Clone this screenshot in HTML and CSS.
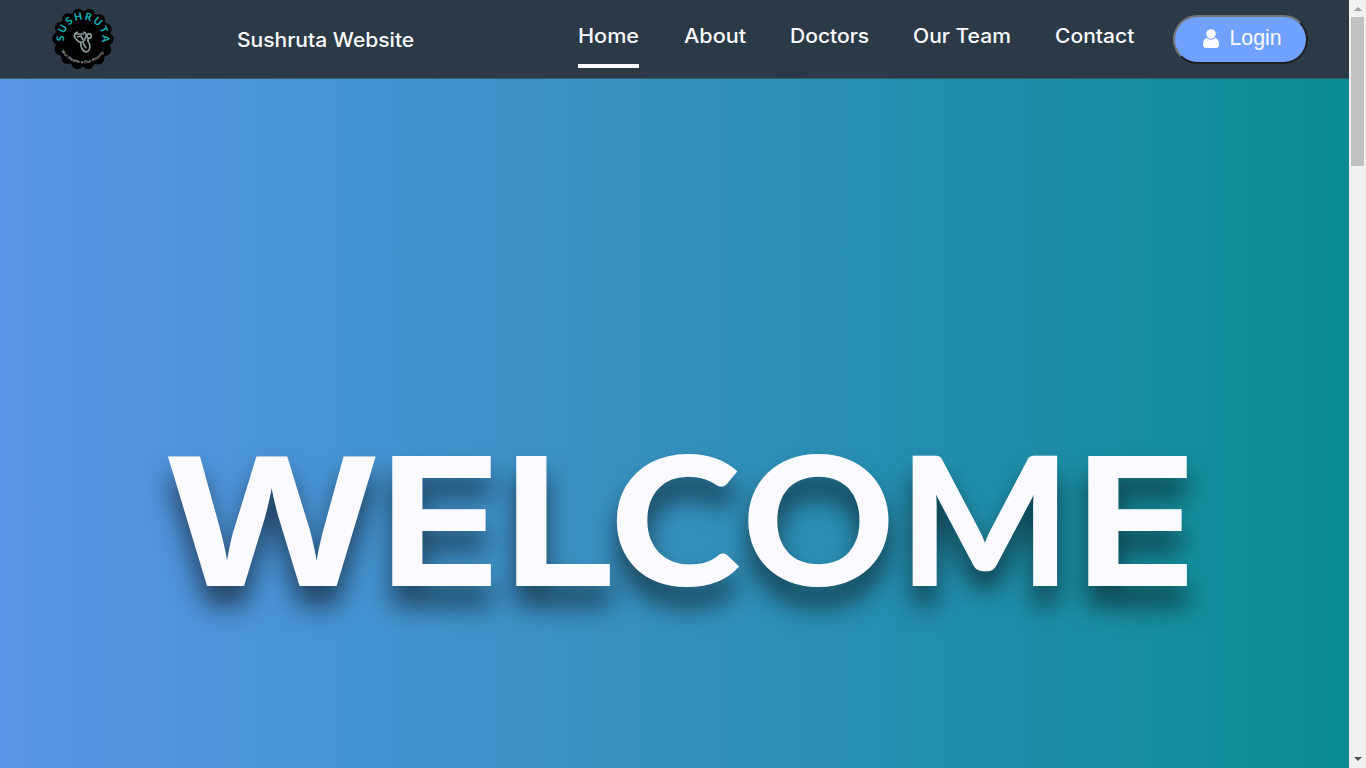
FILE: index.html
```
<!DOCTYPE html>
<html lang="en">
<head>
<meta charset="utf-8">
<title>Sushruta Website</title>
<link rel="stylesheet" href="styles.css">
</head>
<body>
<div class="page">
  <header class="navbar">
    <svg class="logo" viewBox="0 0 62 62" aria-label="Sushruta">
      <defs>
        <path id="arc-top" d="M12.300 34 A19 19 0 1 1 49.700 34"/>
        <path id="arc-bottom" d="M8.500 42 A25.500 25.500 0 0 0 53.500 42"/>
      </defs>
      <circle cx="31" cy="31" r="28"/>
      <circle class="scallops" cx="31" cy="31" r="25"/>
      <text class="logo-name"><textPath href="#arc-top" startOffset="1" textLength="65">SUSHRUTA</textPath></text>
      <path class="logo-ring" d="M10 40 A23 23 0 0 0 52 40"/>
      <text class="logo-motto"><textPath href="#arc-bottom" startOffset="1" textLength="51">Your Health • Our Priority</textPath></text>
      <g class="scope">
        <path d="M26 24 L23.500 25 Q21.500 27 23 30 L27 34 H31 L34 29 Q35 25 31 24"/>
        <path d="M28.500 34 Q29 43 34 44 Q39 43 37.500 36 Q34.500 32 37 30"/>
        <circle cx="37.200" cy="28" r="2.200"/>
        <path d="M25 29 L29 28 L31 32 M31 35 L34 40 M23 26 H32"/>
      </g>
    </svg>
    <div class="brand"><span>Sushruta Website</span></div>
    <nav class="menu">
      <a class="link home active"><span>Home</span></a>
      <a class="link about"><span>About</span></a>
      <a class="link doctors"><span>Doctors</span></a>
      <a class="link team"><span>Our Team</span></a>
      <a class="link contact"><span>Contact</span></a>
    </nav>
    <button class="login">
      <svg class="user" viewBox="0 0 16 19"><circle cx="8" cy="5" r="4.800"/><path d="M3.600 9 Q0 10 0 15.500 Q0 19 3 19 H13 Q16 19 16 15.500 Q16 10 12.400 9 Q8 12.500 3.600 9Z"/></svg>
      <span>Login</span>
    </button>
  </header>
  <main class="hero">
    <h1 class="welcome"><span class="w">W</span><span class="e">E</span><span class="l">L</span><span class="c">C</span><span class="o">O</span><span class="m">M</span><span class="e">E</span></h1>
  </main>
</div>
<aside class="scrollbar"><i class="up"></i><i class="thumb"></i><i class="down"></i></aside>
</body>
</html>
```
FILE: styles.css
```
* { box-sizing: border-box; }
body {
  margin: 0;
  height: 768px;
  display: flex;
  overflow: hidden;
  font-family: Inter, "Open Sans", sans-serif;
  color: #fbfaff;
}
.page {
  width: 1349px;
  height: 768px;
  background: linear-gradient(90deg, #5c95e7 0%, #5494e0 7%, #4793d3 24%, #3890c0 46%, #248eae 68%, #178e9f 86%, #088b91 100%);
}
.navbar {
  height: 79px;
  display: flex;
  align-items: flex-start;
  background: #2c3a47;
  border-bottom: 1px solid #2d5f70;
}
.logo { width: 62px; height: 62px; margin: 8px 0 0 52px; }
.scallops { fill: none; stroke: #000; stroke-width: 11.500; stroke-linecap: round; stroke-dasharray: 0 11.220; }
.logo-name { font: 900 10.300px Lato, sans-serif; fill: #0daeb2; }
.logo-motto { font: 700 4px Lato, sans-serif; fill: #c4b9b5; }
.logo-ring { fill: none; stroke: #063c40; stroke-width: 0.700; }
.scope { fill: none; stroke: #8b9c9b; stroke-width: 1.700; }
.brand {
  width: 178px;
  margin: 28px 0 0 122.500px;
  font-size: 19.400px;
  font-weight: 500;
  line-height: 24px;
  white-space: nowrap;
}
.brand span, .link span { display: inline-block; transform: scaleX(1.085); transform-origin: 0 50%; }
.menu { display: flex; margin: 24px 0 0 163px; gap: 45px; }
.link {
  height: 44px;
  font-size: 19.400px;
  font-weight: 500;
  line-height: 24px;
  white-space: nowrap;
}
.active { border-bottom: 4px solid #fbfaff; }
.home { width: 61px; }
.link.home span, .link.about span { transform: scaleX(1.115); }
.about { width: 61px; }
.doctors { width: 78px; }
.team { width: 97px; }
.contact { width: 79px; }
.login {
  display: flex;
  align-items: center;
  width: 135px;
  height: 49px;
  margin: 15px 0 0 39px;
  padding: 0 0 3px 28px;
  gap: 11px;
  border: 2px solid;
  border-color: #767676 #212121 #212121 #767676;
  border-radius: 25px;
  background: #70a1ff;
  color: #fbfaff;
  font: 21.300px "Liberation Sans", Arial, sans-serif;
}
.user { width: 16px; height: 19px; fill: #fbfaff; }
.hero { padding: 346px 0 0 168px; }
.welcome {
  display: flex;
  align-items: baseline;
  margin: 0;
  font: 900 178.700px/180px Lato, sans-serif;
  filter: drop-shadow(0 20px 13px rgba(0, 0, 0, 0.550));
}
.welcome span { transform-origin: 0 50%; }
.welcome .w { width: 211px; font: 700 182px/180px "Open Sans", sans-serif; transform: scaleX(1.180); }
.e, .l { font: 700 178.800px/180px Inter, sans-serif; transform: scaleX(1.130); }
.e { width: 124px; }
.l { width: 107px; }
.c { width: 132px; transform: scaleX(1.110); }
.o { width: 157px; transform: scaleX(1.055); }
.m { width: 176px; transform: scaleX(1.010); }
.scrollbar {
  width: 17px;
  height: 768px;
  display: flex;
  flex-direction: column;
  align-items: center;
  background: #f1f1f1;
}
.up { margin-top: 7px; border: 4px solid transparent; border-top: 0; border-bottom-color: #a3a3a3; }
.thumb { width: 13px; height: 149px; margin-top: 6px; background: #c1c1c1; }
.down { margin-top: 591px; border: 4px solid transparent; border-bottom: 0; border-top-color: #505050; }
```
